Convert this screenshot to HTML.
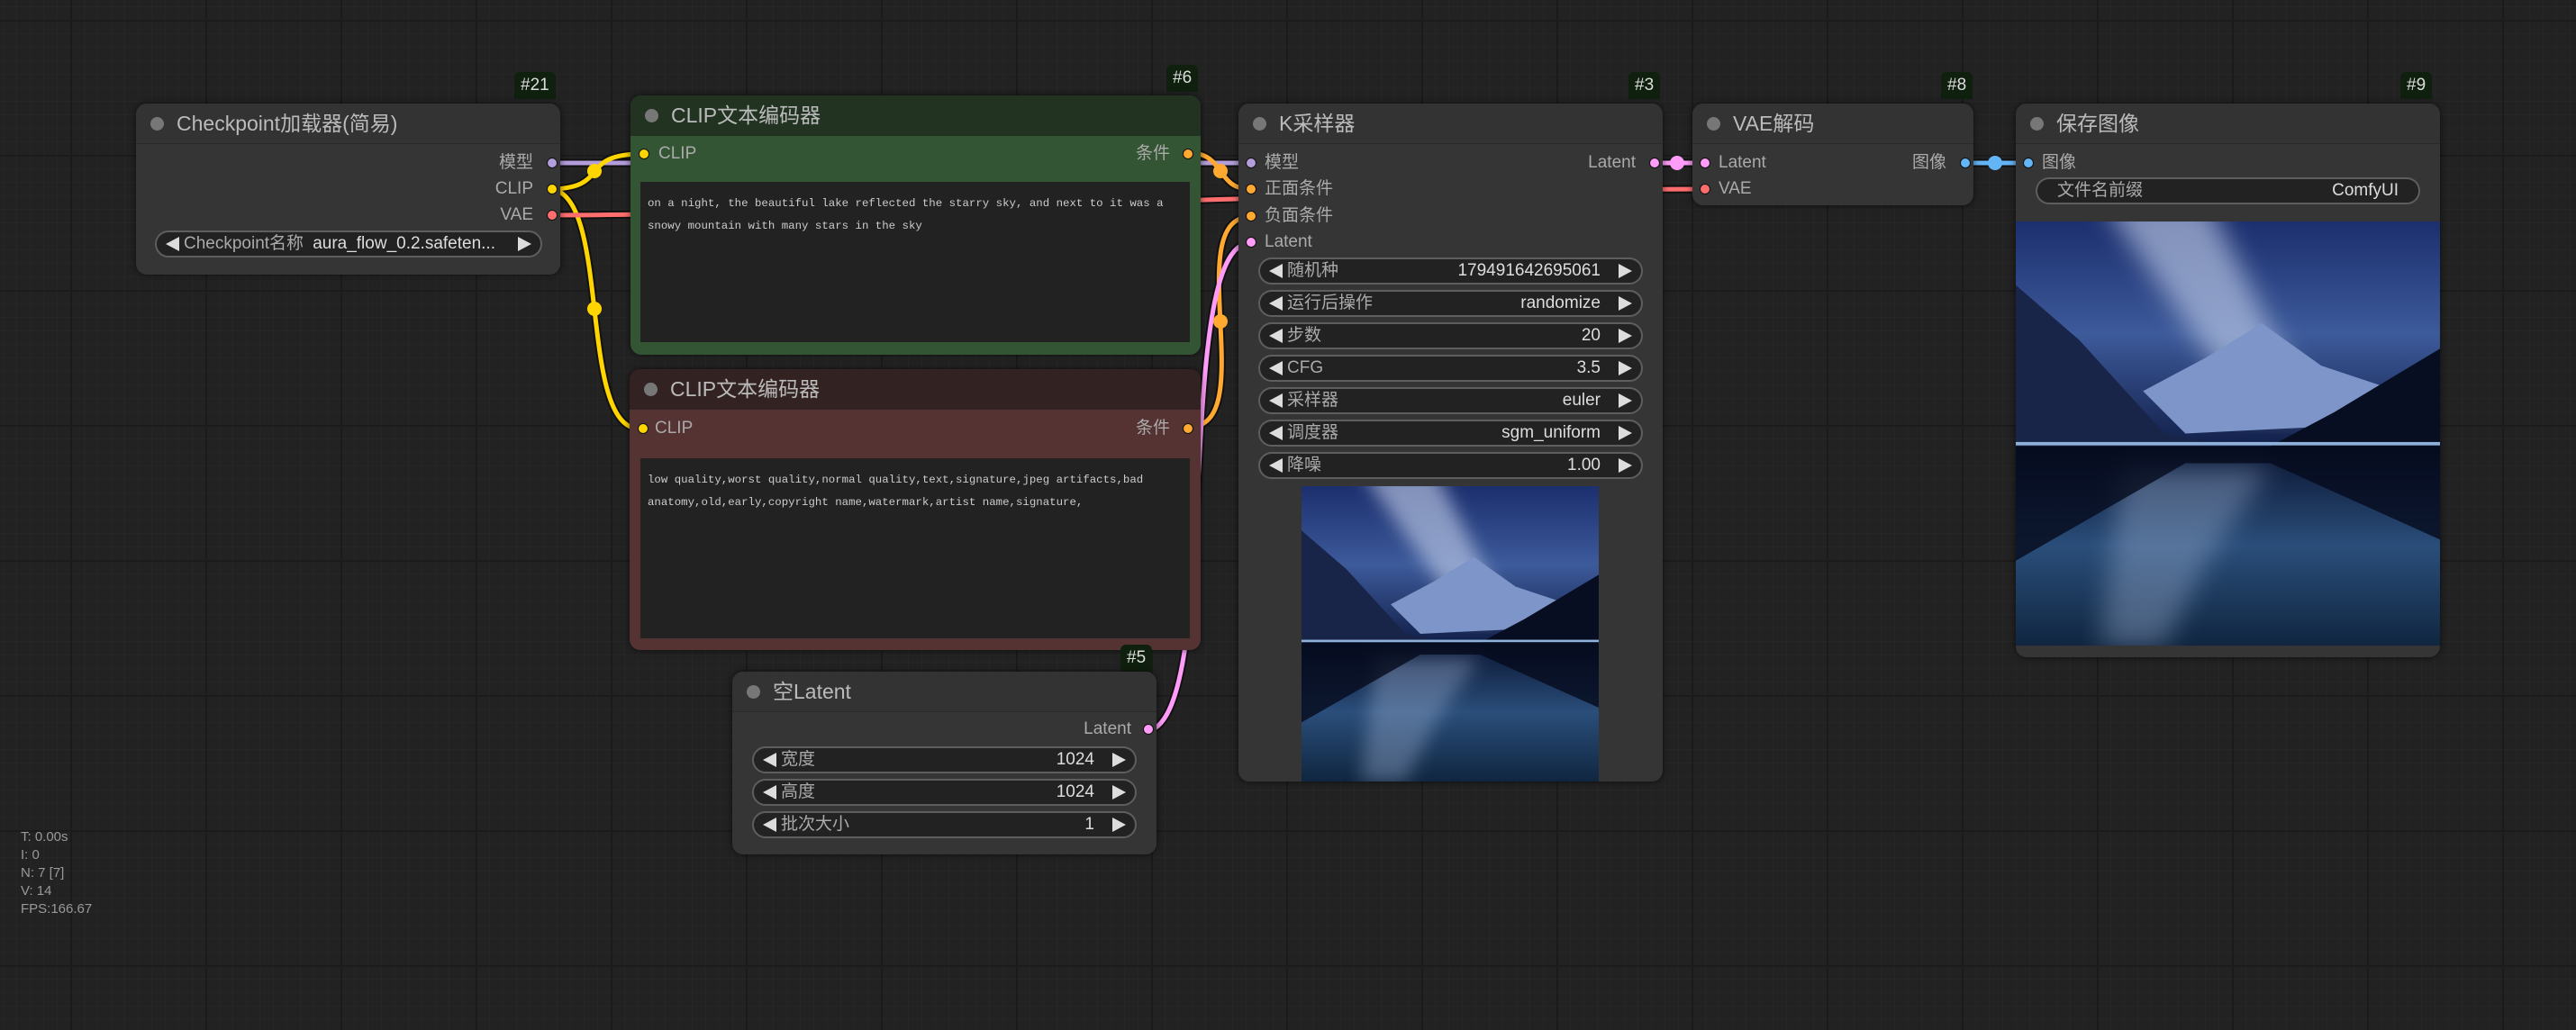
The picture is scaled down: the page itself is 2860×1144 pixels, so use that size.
<!DOCTYPE html>
<html><head><meta charset="utf-8"><style>
*{margin:0;padding:0;box-sizing:border-box}
body{width:2860px;height:1144px;overflow:hidden;background:#222;font-family:"Liberation Sans","Noto Sans CJK SC",sans-serif;position:relative;
background-image:linear-gradient(#1b1b1b 2px,transparent 2px),linear-gradient(90deg,#1b1b1b 2px,transparent 2px),linear-gradient(#262626 1px,transparent 1px),linear-gradient(90deg,#262626 1px,transparent 1px);
background-size:150px 150px,150px 150px,15px 15px,15px 15px;background-position:78px 22px,78px 22px,3px 7px,3px 7px}
.node{position:absolute;background:#353535;border-radius:12px;box-shadow:0 0 8px rgba(0,0,0,.6)}
.tb{height:45px;border-bottom:1px solid #2a2a2a;border-radius:12px 12px 0 0;position:relative;background:#333}
.tb .d{position:absolute;left:16px;top:15px;width:15px;height:15px;border-radius:50%;background:#777}
.tb .t{position:absolute;left:45px;top:8px;font-size:23px;line-height:28px;color:#bbb}
.badge{position:absolute;background:#10200f;color:#ddd;font-size:19px;line-height:22px;padding:4px 7px;border-radius:6px 6px 0 0}
.lab{position:absolute;font-size:19px;line-height:22px;color:#aaa}
.dot{position:absolute;width:12px;height:12px;border-radius:50%;border:1.5px solid #111}
.w{position:absolute;height:30px;border:2px solid #5e5e5e;border-radius:15px;background:#222;color:#ccc;font-size:19px;line-height:26px}
.w .l{position:absolute;left:30px;top:0;color:#aaa;line-height:26px}
.w .v{position:absolute;right:45px;top:0;color:#ddd;line-height:26px}
.w:before{content:"";position:absolute;left:10px;top:5px;border-right:15px solid #ddd;border-top:8px solid transparent;border-bottom:8px solid transparent}
.w:after{content:"";position:absolute;right:10px;top:5px;border-left:15px solid #ddd;border-top:8px solid transparent;border-bottom:8px solid transparent}
.w.na:before,.w.na:after{display:none}
.ta{position:absolute;background:#222;font-family:"Liberation Mono",monospace;font-size:12.4px;color:#ccc;line-height:25px;padding:12px 8px}
.stats{position:absolute;left:23px;top:920px;font-size:15px;line-height:20px;color:#999}
</style></head><body>
<svg width="0" height="0" style="position:absolute">
<defs>
<linearGradient id="sky" x1="0" y1="0" x2="0" y2="1"><stop offset="0" stop-color="#1c2f6e"/><stop offset=".5" stop-color="#3d5a9a"/><stop offset="1" stop-color="#12204a"/></linearGradient>
<linearGradient id="wat" x1="0" y1="0" x2="0" y2="1"><stop offset="0" stop-color="#0a1430"/><stop offset=".5" stop-color="#2a4e7a"/><stop offset="1" stop-color="#102640"/></linearGradient>
<filter id="bl"><feGaussianBlur stdDeviation="3"/></filter>
<g id="img">
<rect width="100" height="53" fill="url(#sky)"/>
<path d="M20 -5 L45 -5 L70 45 L55 45Z" fill="#c8d4ee" opacity=".6" filter="url(#bl)"/>
<path d="M0 15 L15 28 L35 50 L50 53 L0 53Z" fill="#182448"/>
<path d="M30 40 L45 32 L58 24 L72 34 L90 40 L80 48 L40 50Z" fill="#7d95c8"/>
<path d="M100 30 L75 45 L60 53 L100 53Z" fill="#080e22"/>
<rect y="53" width="100" height="47" fill="url(#wat)"/>
<path d="M25 58 L60 58 L45 80 L35 100 L20 100Z" fill="#9aaed0" opacity=".4" filter="url(#bl)"/>
<path d="M0 53 L100 53 L100 75 L60 57 L40 57 L0 80Z" fill="#050a1c" opacity=".8"/>
<rect y="52" width="100" height="0.8" fill="#8fb0d8"/>
</g>
</defs>
</svg>
<svg width="2860" height="1144" style="position:absolute;left:0;top:0" fill="none" stroke-linecap="round">
<g stroke="#111" stroke-width="9">
<path d="M615 181 C700 181 1300 181 1388 181"/>
<path d="M609 210 C680 210 640 171 713 171"/>
<path d="M609 210 C680 210 640 476 710 476"/>
<path d="M609 239 C900 239 1600 210 1892 210"/>
<path d="M1321 170 C1360 170 1350 210 1388 210"/>
<path d="M1321 474 C1400 474 1310 241 1388 241"/>
<path d="M1271 812 C1360 812 1300 270 1388 270"/>
<path d="M1833 181 C1860 181 1865 181 1892 181"/>
<path d="M2178 181 C2210 181 2220 181 2253 181"/>
</g>
<g stroke-width="5">
<path stroke="#b39ddb" d="M615 181 C700 181 1300 181 1388 181"/>
<path stroke="#ffd500" d="M609 210 C680 210 640 171 713 171"/>
<path stroke="#ffd500" d="M609 210 C680 210 640 476 710 476"/>
<path stroke="#ff6e6e" d="M609 239 C900 239 1600 210 1892 210"/>
<path stroke="#ffa931" d="M1321 170 C1360 170 1350 210 1388 210"/>
<path stroke="#ffa931" d="M1321 474 C1400 474 1310 241 1388 241"/>
<path stroke="#ff9cf9" d="M1271 812 C1360 812 1300 270 1388 270"/>
<path stroke="#ff9cf9" d="M1833 181 C1860 181 1865 181 1892 181"/>
<path stroke="#64b5f6" d="M2178 181 C2210 181 2220 181 2253 181"/>
</g>
<g>
<circle cx="660" cy="190" r="8" fill="#ffd500"/><circle cx="660" cy="343" r="8" fill="#ffd500"/>
<circle cx="1355" cy="190" r="8" fill="#ffa931"/><circle cx="1355" cy="357" r="8" fill="#ffa931"/>
<circle cx="1862" cy="181" r="8" fill="#ff9cf9"/><circle cx="2215" cy="181" r="8" fill="#64b5f6"/>
</g>
</svg>

<div class="badge" style="left:571px;top:80px">#21</div>
<div class="node" style="left:151px;top:115px;width:471px;height:190px">
<div class="tb"><div class="d"></div><div class="t">Checkpoint加载器(简易)</div></div>
<div class="lab" style="right:30px;top:55px">模型</div><div class="dot" style="right:3px;top:60px;background:#b39ddb"></div>
<div class="lab" style="right:30px;top:84px">CLIP</div><div class="dot" style="right:3px;top:89px;background:#ffd500"></div>
<div class="lab" style="right:30px;top:113px">VAE</div><div class="dot" style="right:3px;top:118px;background:#ff6e6e"></div>
<div class="w" style="left:21px;top:141px;width:430px"><span class="l">Checkpoint名称</span><span class="v" style="right:50px">aura_flow_0.2.safeten...</span></div>
</div>

<div class="badge" style="left:1295px;top:72px">#6</div>
<div class="node" style="left:700px;top:106px;width:633px;height:288px;background:#335533">
<div class="tb" style="background:#223322;border-color:#223322"><div class="d"></div><div class="t">CLIP文本编码器</div></div>
<div class="dot" style="left:9px;top:59px;background:#ffd500"></div><div class="lab" style="left:31px;top:54px">CLIP</div>
<div class="lab" style="right:34px;top:54px">条件</div><div class="dot" style="right:8px;top:59px;background:#ffa931"></div>
<div class="ta" style="left:11px;top:96px;width:610px;height:178px">on a night, the beautiful lake reflected the starry sky, and next to it was a snowy mountain with many stars in the sky</div>
</div>

<div class="node" style="left:699px;top:410px;width:634px;height:312px;background:#553333">
<div class="tb" style="background:#332222;border-color:#332222"><div class="d"></div><div class="t">CLIP文本编码器</div></div>
<div class="dot" style="left:9px;top:60px;background:#ffd500"></div><div class="lab" style="left:28px;top:55px">CLIP</div>
<div class="lab" style="right:34px;top:55px">条件</div><div class="dot" style="right:8px;top:60px;background:#ffa931"></div>
<div class="ta" style="left:12px;top:99px;width:610px;height:200px">low quality,worst quality,normal quality,text,signature,jpeg artifacts,bad anatomy,old,early,copyright name,watermark,artist name,signature,</div>
</div>

<div class="badge" style="left:1244px;top:716px">#5</div>
<div class="node" style="left:813px;top:746px;width:471px;height:203px">
<div class="tb"><div class="d"></div><div class="t">空Latent</div></div>
<div class="lab" style="right:28px;top:53px">Latent</div><div class="dot" style="right:3px;top:58px;background:#ff9cf9"></div>
<div class="w" style="left:22px;top:83px;width:427px"><span class="l">宽度</span><span class="v">1024</span></div>
<div class="w" style="left:22px;top:119px;width:427px"><span class="l">高度</span><span class="v">1024</span></div>
<div class="w" style="left:22px;top:155px;width:427px"><span class="l">批次大小</span><span class="v">1</span></div>
</div>

<div class="badge" style="left:1808px;top:80px">#3</div>
<div class="node" style="left:1375px;top:115px;width:471px;height:753px">
<div class="tb"><div class="d"></div><div class="t">K采样器</div></div>
<div class="dot" style="left:8px;top:60px;background:#b39ddb"></div><div class="lab" style="left:29px;top:55px">模型</div>
<div class="dot" style="left:8px;top:89px;background:#ffa931"></div><div class="lab" style="left:29px;top:84px">正面条件</div>
<div class="dot" style="left:8px;top:119px;background:#ffa931"></div><div class="lab" style="left:29px;top:114px">负面条件</div>
<div class="dot" style="left:8px;top:148px;background:#ff9cf9"></div><div class="lab" style="left:29px;top:143px">Latent</div>
<div class="lab" style="right:30px;top:55px">Latent</div><div class="dot" style="right:3px;top:60px;background:#ff9cf9"></div>
<div class="w" style="left:22px;top:171px;width:427px"><span class="l">随机种</span><span class="v">179491642695061</span></div>
<div class="w" style="left:22px;top:207px;width:427px"><span class="l">运行后操作</span><span class="v">randomize</span></div>
<div class="w" style="left:22px;top:243px;width:427px"><span class="l">步数</span><span class="v">20</span></div>
<div class="w" style="left:22px;top:279px;width:427px"><span class="l">CFG</span><span class="v">3.5</span></div>
<div class="w" style="left:22px;top:315px;width:427px"><span class="l">采样器</span><span class="v">euler</span></div>
<div class="w" style="left:22px;top:351px;width:427px"><span class="l">调度器</span><span class="v">sgm_uniform</span></div>
<div class="w" style="left:22px;top:387px;width:427px"><span class="l">降噪</span><span class="v">1.00</span></div>
<svg style="position:absolute;left:70px;top:425px" width="330" height="328" viewBox="0 0 100 100" preserveAspectRatio="none"><use href="#img"/></svg>
</div>

<div class="badge" style="left:2155px;top:80px">#8</div>
<div class="node" style="left:1879px;top:115px;width:312px;height:113px">
<div class="tb"><div class="d"></div><div class="t">VAE解码</div></div>
<div class="dot" style="left:8px;top:60px;background:#ff9cf9"></div><div class="lab" style="left:29px;top:55px">Latent</div>
<div class="dot" style="left:8px;top:89px;background:#ff6e6e"></div><div class="lab" style="left:29px;top:84px">VAE</div>
<div class="lab" style="right:30px;top:55px">图像</div><div class="dot" style="right:3px;top:60px;background:#64b5f6"></div>
</div>

<div class="badge" style="left:2665px;top:80px">#9</div>
<div class="node" style="left:2238px;top:115px;width:471px;height:615px">
<div class="tb"><div class="d"></div><div class="t">保存图像</div></div>
<div class="dot" style="left:8px;top:60px;background:#64b5f6"></div><div class="lab" style="left:29px;top:55px">图像</div>
<div class="w na" style="left:22px;top:82px;width:427px"><span class="l" style="left:22px">文件名前缀</span><span class="v" style="right:22px">ComfyUI</span></div>
<svg style="position:absolute;left:0;top:131px" width="471" height="471" viewBox="0 0 100 100" preserveAspectRatio="none"><use href="#img"/></svg>
</div>

<div class="stats">T: 0.00s<br>I: 0<br>N: 7 [7]<br>V: 14<br>FPS:166.67</div>
</body></html>
